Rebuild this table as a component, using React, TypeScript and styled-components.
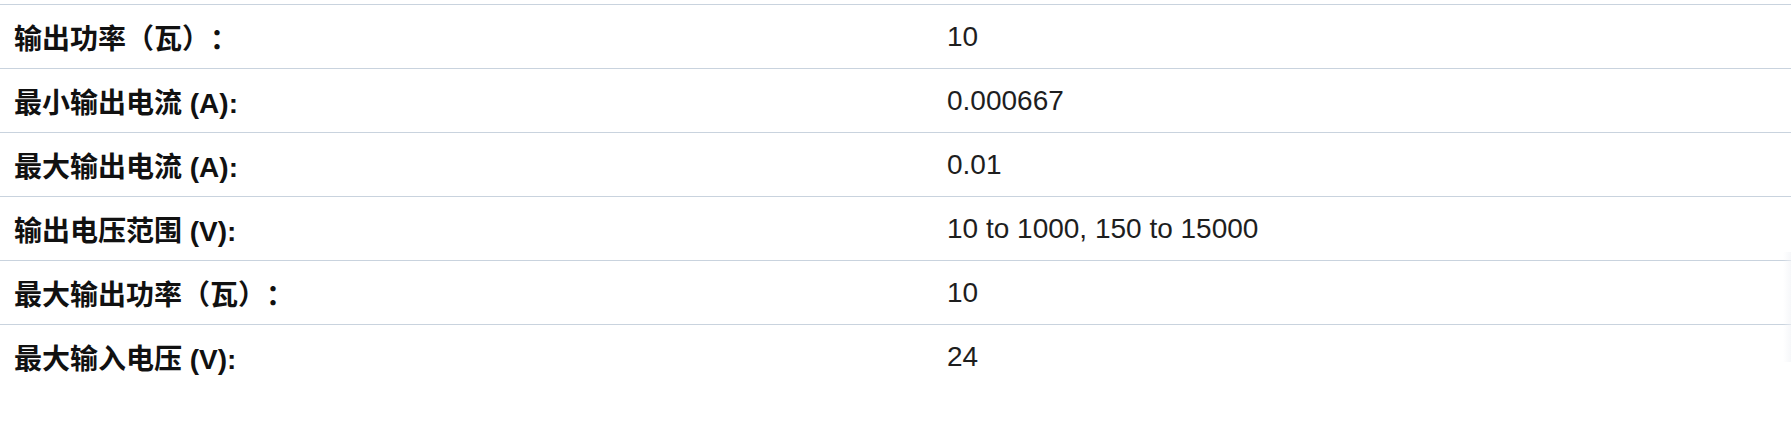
import React from 'react'
import styled, { createGlobalStyle } from 'styled-components'

interface Spec {
  label: string
  value: string
}

const specs: Spec[] = [
  { label: '输出功率（瓦）：', value: '10' },
  { label: '最小输出电流 (A):', value: '0.000667' },
  { label: '最大输出电流 (A):', value: '0.01' },
  { label: '输出电压范围 (V):', value: '10 to 1000, 150 to 15000' },
  { label: '最大输出功率（瓦）：', value: '10' },
  { label: '最大输入电压 (V):', value: '24' }
]

const GlobalStyle = createGlobalStyle`
  html, body {
    margin: 0;
    padding: 0;
    background: #ffffff;
  }
  body {
    font-family: "Liberation Sans", "Noto Sans CJK SC", Arial, sans-serif;
  }
`

const Page = styled.div`
  position: relative;
  width: 1791px;
  height: 425px;
  padding-top: 4px;
  box-sizing: border-box;
  overflow: hidden;
`

const SpecTable = styled.div`
  display: flex;
  flex-direction: column;
`

const SpecRow = styled.div`
  display: grid;
  grid-template-columns: 933px 1fr;
  align-items: center;
  height: 64px;
  box-sizing: border-box;
  border-top: 1px solid #c9d3de;
`

const Label = styled.div`
  padding-left: 14px;
  padding-top: 1px;
  font-family: "Liberation Sans", "Noto Sans CJK SC", Arial, sans-serif;
  font-size: 28px;
  font-weight: 700;
  color: #111111;
  white-space: nowrap;
  text-spacing-trim: space-all;
`

const Value = styled.div`
  padding-left: 14px;
  padding-top: 1px;
  font-family: "Liberation Sans", Arial, sans-serif;
  font-size: 28px;
  font-weight: 400;
  color: #1e1e1e;
  white-space: nowrap;
`

const EdgeShade = styled.div`
  position: absolute;
  right: 0;
  top: 252px;
  width: 8px;
  height: 110px;
  background: linear-gradient(to right, rgba(240, 242, 245, 0), rgba(240, 242, 246, 0.6));
`

const App = () => {
  return (
    <>
      <GlobalStyle />
      <Page>
        <SpecTable>
          {specs.map((spec) => (
            <SpecRow key={spec.label}>
              <Label>{spec.label}</Label>
              <Value>{spec.value}</Value>
            </SpecRow>
          ))}
        </SpecTable>
        <EdgeShade />
      </Page>
    </>
  )
}

export default App
